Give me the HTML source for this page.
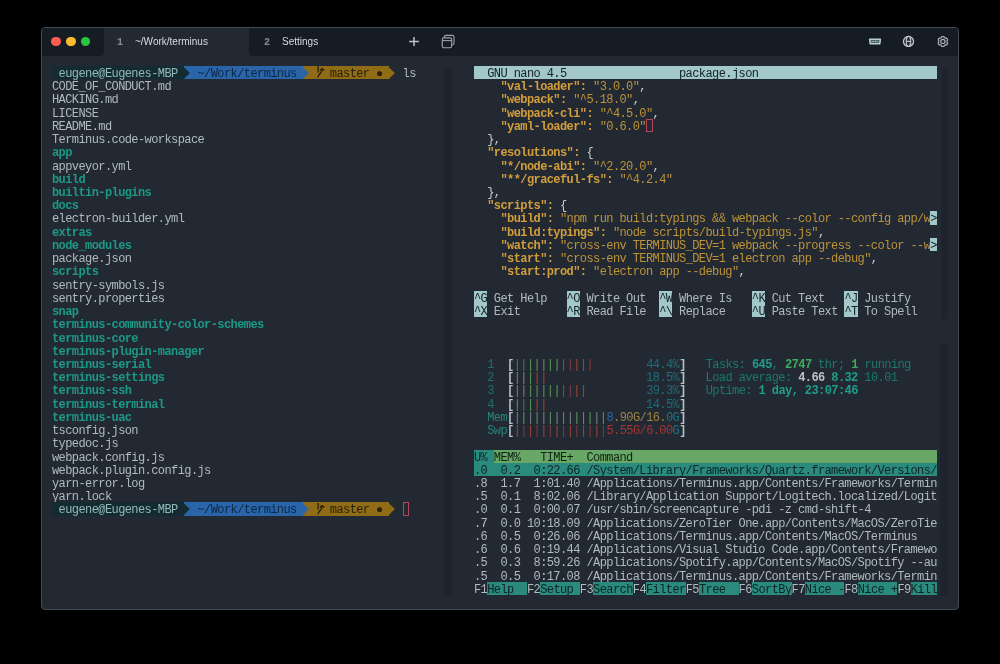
<!DOCTYPE html>
<html><head><meta charset="utf-8"><style>
html,body{margin:0;padding:0;width:1000px;height:664px;overflow:hidden;background:#000;}
#win{position:absolute;left:41px;top:27px;width:916px;height:581px;border:1px solid #434b52;border-radius:4px;background:#222933;overflow:hidden;}
.tbdark{position:absolute;top:0;height:27.6px;background:#161c24;}
.pane{position:absolute;will-change:transform;font-family:"Liberation Mono",monospace;font-size:12px;letter-spacing:-0.588px;color:#afbbbe;}
.r{position:absolute;left:0;height:13.225px;line-height:16px;white-space:pre;}
.r>span{display:inline-block;height:13.225px;vertical-align:top;}
.dot{position:absolute;width:9.5px;height:9.5px;border-radius:50%;top:8.75px;}
.tab{position:absolute;will-change:transform;font-family:"Liberation Sans",sans-serif;font-size:10px;line-height:12px;color:#d6dbe0;top:8px;white-space:pre;}
.tnum{position:absolute;will-change:transform;font-family:"Liberation Mono",monospace;font-weight:bold;font-size:10px;line-height:12px;color:#858d94;top:8px;}
.vs{position:absolute;background:#1e242d;}
.ar,.ic{position:absolute;}
</style></head><body>
<div id="win">
 <div class="tbdark" style="left:0;width:62px;border-bottom-right-radius:4px"></div>
 <div class="tbdark" style="left:207px;right:0;border-bottom-left-radius:4px"></div>
 <div class="dot" style="left:9.45px;background:#fc5c52"></div>
 <div class="dot" style="left:24.25px;background:#fdbc2f"></div>
 <div class="dot" style="left:38.85px;background:#2ac641"></div>
 <div class="tnum" style="left:74.5px;top:8.7px">1</div>
 <div class="tab" style="left:93.3px">~/Work/terminus</div>
 <div class="tnum" style="left:222px;top:8.7px">2</div>
 <div class="tab" style="left:239.7px">Settings</div>
 <div class="vs" style="left:402px;top:39px;width:8px;height:530px"></div>
 <div class="vs" style="left:898.5px;top:39px;width:7.5px;height:252px;border-bottom-left-radius:3px;border-bottom-right-radius:3px"></div>
 <div class="vs" style="left:898px;top:316px;width:8px;height:252px"></div>
</div>

<svg class="ic" style="left:407px;top:35px" width="14" height="13" viewBox="0 0 14 13"><path d="M2.2 6.4 H11.9 M7 1.9 V11" stroke="#b9c0c6" stroke-width="1.5"/></svg>
<svg class="ic" style="left:440px;top:33px" width="16" height="17" viewBox="0 0 16 17"><rect x="4.2" y="2.4" width="9.8" height="9.4" rx="1.8" fill="none" stroke="#9aa3aa" stroke-width="1.1"/><rect x="2.3" y="4.9" width="9.4" height="9.9" rx="1.8" fill="#151b22" stroke="#9aa3aa" stroke-width="1.1"/><path d="M2.3 7.6 H11.7" stroke="#9aa3aa" stroke-width="1.1"/></svg>
<svg class="ic" style="left:866px;top:36px" width="18" height="10" viewBox="0 0 18 10"><path d="M3.6 3.3 H14.4 L13.7 7.8 H4.3 Z" fill="#4e6468" stroke="#b9d0d0" stroke-width="1.5" stroke-linejoin="round"/><path d="M5.6 5.5 H12.4" stroke="#9fb5b6" stroke-width="1.1" stroke-dasharray="1.1 0.6"/></svg>
<svg class="ic" style="left:901px;top:34px" width="15" height="15" viewBox="0 0 15 15"><circle cx="7.5" cy="7.4" r="5.0" fill="none" stroke="#c2cbd0" stroke-width="1.3"/><ellipse cx="7.5" cy="7.4" rx="2.3" ry="5.0" fill="none" stroke="#c2cbd0" stroke-width="1.1"/><path d="M5.4 7.4 H9.6" stroke="#c2cbd0" stroke-width="1.3"/><path d="M3.2 4.9 H11.8 M3.2 9.9 H11.8" stroke="#c2cbd0" stroke-width="0.8" stroke-dasharray="1 1.4" opacity="0.7"/></svg>
<svg class="ic" style="left:934.5px;top:34px" width="15" height="15" viewBox="0 0 15 15"><path d="M6.56 3.52 L6.84 2.51 L8.96 2.51 L9.24 3.52 L10.68 4.35 L11.69 4.09 L12.75 5.92 L12.02 6.67 L12.02 8.33 L12.75 9.08 L11.69 10.91 L10.68 10.65 L9.24 11.48 L8.96 12.49 L6.84 12.49 L6.56 11.48 L5.12 10.65 L4.11 10.91 L3.05 9.08 L3.78 8.33 L3.78 6.67 L3.05 5.92 L4.11 4.09 L5.12 4.35 Z" fill="none" stroke="#aab3b9" stroke-width="1.15" stroke-linejoin="round"/><circle cx="7.9" cy="7.4" r="2.1" fill="none" stroke="#aab3b9" stroke-width="1.15"/></svg>

<div class="pane " style="left:52.40px;top:66.20px"><div class="r" style="top:0.00px"><span style="background:#132b31;color:#93b9bb"> eugene@Eugenes-MBP </span><span style="background:#2a65a9"> </span><span style="background:#2a65a9;color:#0b2745"> ~/Work/terminus </span><span style="background:#8f6c15"> </span><span style="background:#8f6c15;color:#2a2208">   master ● </span>  ls</div>
<div class="r" style="top:13.22px">CODE_OF_CONDUCT.md</div>
<div class="r" style="top:26.45px">HACKING.md</div>
<div class="r" style="top:39.67px">LICENSE</div>
<div class="r" style="top:52.90px">README.md</div>
<div class="r" style="top:66.12px">Terminus.code-workspace</div>
<div class="r" style="top:79.35px"><span style="color:#1c9886;font-weight:bold">app</span></div>
<div class="r" style="top:92.58px">appveyor.yml</div>
<div class="r" style="top:105.80px"><span style="color:#1c9886;font-weight:bold">build</span></div>
<div class="r" style="top:119.02px"><span style="color:#1c9886;font-weight:bold">builtin-plugins</span></div>
<div class="r" style="top:132.25px"><span style="color:#1c9886;font-weight:bold">docs</span></div>
<div class="r" style="top:145.47px">electron-builder.yml</div>
<div class="r" style="top:158.70px"><span style="color:#1c9886;font-weight:bold">extras</span></div>
<div class="r" style="top:171.92px"><span style="color:#1c9886;font-weight:bold">node_modules</span></div>
<div class="r" style="top:185.15px">package.json</div>
<div class="r" style="top:198.38px"><span style="color:#1c9886;font-weight:bold">scripts</span></div>
<div class="r" style="top:211.60px">sentry-symbols.js</div>
<div class="r" style="top:224.82px">sentry.properties</div>
<div class="r" style="top:238.05px"><span style="color:#1c9886;font-weight:bold">snap</span></div>
<div class="r" style="top:251.28px"><span style="color:#1c9886;font-weight:bold">terminus-community-color-schemes</span></div>
<div class="r" style="top:264.50px"><span style="color:#1c9886;font-weight:bold">terminus-core</span></div>
<div class="r" style="top:277.72px"><span style="color:#1c9886;font-weight:bold">terminus-plugin-manager</span></div>
<div class="r" style="top:290.95px"><span style="color:#1c9886;font-weight:bold">terminus-serial</span></div>
<div class="r" style="top:304.18px"><span style="color:#1c9886;font-weight:bold">terminus-settings</span></div>
<div class="r" style="top:317.40px"><span style="color:#1c9886;font-weight:bold">terminus-ssh</span></div>
<div class="r" style="top:330.62px"><span style="color:#1c9886;font-weight:bold">terminus-terminal</span></div>
<div class="r" style="top:343.85px"><span style="color:#1c9886;font-weight:bold">terminus-uac</span></div>
<div class="r" style="top:357.07px">tsconfig.json</div>
<div class="r" style="top:370.30px">typedoc.js</div>
<div class="r" style="top:383.52px">webpack.config.js</div>
<div class="r" style="top:396.75px">webpack.plugin.config.js</div>
<div class="r" style="top:409.97px">yarn-error.log</div>
<div class="r" style="top:423.20px">yarn.lock</div>
<div class="r" style="top:436.43px"><span style="background:#132b31;color:#93b9bb"> eugene@Eugenes-MBP </span><span style="background:#2a65a9"> </span><span style="background:#2a65a9;color:#0b2745"> ~/Work/terminus </span><span style="background:#8f6c15"> </span><span style="background:#8f6c15;color:#2a2208">   master ● </span>  <span style="outline:1px solid #b4485a;outline-offset:-1px"> </span></div></div>
<div class="pane " style="left:474.00px;top:66.20px"><div class="r" style="top:0.00px"><span style="background:#a3c8ca;color:#13202a">  GNU nano 4.5                 package.json                           </span></div>
<div class="r" style="top:13.22px">    <span style="color:#d29e3c;font-weight:bold">"val-loader"</span><span style="color:#d29e3c;font-weight:bold">: </span><span style="color:#bd9338">"3.0.0"</span><span style="color:#c8d0d4">,</span></div>
<div class="r" style="top:26.45px">    <span style="color:#d29e3c;font-weight:bold">"webpack"</span><span style="color:#d29e3c;font-weight:bold">: </span><span style="color:#bd9338">"^5.18.0"</span><span style="color:#c8d0d4">,</span></div>
<div class="r" style="top:39.67px">    <span style="color:#d29e3c;font-weight:bold">"webpack-cli"</span><span style="color:#d29e3c;font-weight:bold">: </span><span style="color:#bd9338">"^4.5.0"</span><span style="color:#c8d0d4">,</span></div>
<div class="r" style="top:52.90px">    <span style="color:#d29e3c;font-weight:bold">"yaml-loader"</span><span style="color:#d29e3c;font-weight:bold">: </span><span style="color:#bd9338">"0.6.0"</span><span style="outline:1px solid #b4485a;outline-offset:-1px"> </span></div>
<div class="r" style="top:66.12px"><span style="color:#c8d0d4">  },</span></div>
<div class="r" style="top:79.35px">  <span style="color:#d29e3c;font-weight:bold">"resolutions"</span><span style="color:#d29e3c;font-weight:bold">: </span><span style="color:#c8d0d4">{</span></div>
<div class="r" style="top:92.58px">    <span style="color:#d29e3c;font-weight:bold">"*/node-abi"</span><span style="color:#d29e3c;font-weight:bold">: </span><span style="color:#bd9338">"^2.20.0"</span><span style="color:#c8d0d4">,</span></div>
<div class="r" style="top:105.80px">    <span style="color:#d29e3c;font-weight:bold">"**/graceful-fs"</span><span style="color:#d29e3c;font-weight:bold">: </span><span style="color:#bd9338">"^4.2.4"</span></div>
<div class="r" style="top:119.02px"><span style="color:#c8d0d4">  },</span></div>
<div class="r" style="top:132.25px">  <span style="color:#d29e3c;font-weight:bold">"scripts"</span><span style="color:#d29e3c;font-weight:bold">: </span><span style="color:#c8d0d4">{</span></div>
<div class="r" style="top:145.47px">    <span style="color:#d29e3c;font-weight:bold">"build"</span><span style="color:#d29e3c;font-weight:bold">: </span><span style="color:#bd9338">"npm run build:typings &amp;&amp; webpack --color --config app/w</span><span style="background:#a3c8ca;color:#13202a">&gt;</span></div>
<div class="r" style="top:158.70px">    <span style="color:#d29e3c;font-weight:bold">"build:typings"</span><span style="color:#d29e3c;font-weight:bold">: </span><span style="color:#bd9338">"node scripts/build-typings.js"</span><span style="color:#c8d0d4">,</span></div>
<div class="r" style="top:171.92px">    <span style="color:#d29e3c;font-weight:bold">"watch"</span><span style="color:#d29e3c;font-weight:bold">: </span><span style="color:#bd9338">"cross-env TERMINUS_DEV=1 webpack --progress --color --w</span><span style="background:#a3c8ca;color:#13202a">&gt;</span></div>
<div class="r" style="top:185.15px">    <span style="color:#d29e3c;font-weight:bold">"start"</span><span style="color:#d29e3c;font-weight:bold">: </span><span style="color:#bd9338">"cross-env TERMINUS_DEV=1 electron app --debug"</span><span style="color:#c8d0d4">,</span></div>
<div class="r" style="top:198.38px">    <span style="color:#d29e3c;font-weight:bold">"start:prod"</span><span style="color:#d29e3c;font-weight:bold">: </span><span style="color:#bd9338">"electron app --debug"</span><span style="color:#c8d0d4">,</span></div>
<div class="r" style="top:211.60px"></div>
<div class="r" style="top:224.82px"><span style="background:#a3c8ca;color:#13202a">^G</span> Get Help   <span style="background:#a3c8ca;color:#13202a">^O</span> Write Out  <span style="background:#a3c8ca;color:#13202a">^W</span> Where Is   <span style="background:#a3c8ca;color:#13202a">^K</span> Cut Text   <span style="background:#a3c8ca;color:#13202a">^J</span> Justify    </div>
<div class="r" style="top:238.05px"><span style="background:#a3c8ca;color:#13202a">^X</span> Exit       <span style="background:#a3c8ca;color:#13202a">^R</span> Read File  <span style="background:#a3c8ca;color:#13202a">^\</span> Replace    <span style="background:#a3c8ca;color:#13202a">^U</span> Paste Text <span style="background:#a3c8ca;color:#13202a">^T</span> To Spell   </div></div>
<div class="pane " style="left:474.00px;top:357.40px"><div class="r" style="top:0.00px">  <span style="color:#1e716b">1</span>  <span style="color:#b9c1c5;font-weight:bold">[</span><span style="color:#4c7a57">|</span><span style="color:#4c7a57">|</span><span style="color:#5a995a">|</span><span style="color:#5a995a">|</span><span style="color:#5a995a">|</span><span style="color:#5a995a">|</span><span style="color:#5a995a">|</span><span style="color:#a8433a">|</span><span style="color:#873a42">|</span><span style="color:#a8433a">|</span><span style="color:#a8433a">|</span><span style="color:#873a42">|</span>        <span style="color:#1f6d79">44.4%</span><span style="color:#b9c1c5;font-weight:bold">]</span>   <span style="color:#1c786d">Tasks: </span><span style="color:#1f9c8b;font-weight:bold">645</span><span style="color:#1c786d">, </span><span style="color:#3cad5c;font-weight:bold">2747</span><span style="color:#1c786d"> thr; </span><span style="color:#3cad5c;font-weight:bold">1</span><span style="color:#1c786d"> running</span></div>
<div class="r" style="top:13.22px">  <span style="color:#1e716b">2</span>  <span style="color:#b9c1c5;font-weight:bold">[</span><span style="color:#77848a">|</span><span style="color:#77848a">|</span><span style="color:#5a995a">|</span><span style="color:#a8433a">|</span><span style="color:#a8433a">|</span>               <span style="color:#1f6d79">18.5%</span><span style="color:#b9c1c5;font-weight:bold">]</span>   <span style="color:#1c786d">Load average: </span><span style="color:#b9c2c6;font-weight:bold">4.66</span> <span style="color:#1f9c8b;font-weight:bold">8.32 </span><span style="color:#1c786d">10.01</span></div>
<div class="r" style="top:26.45px">  <span style="color:#1e716b">3</span>  <span style="color:#b9c1c5;font-weight:bold">[</span><span style="color:#77848a">|</span><span style="color:#77848a">|</span><span style="color:#5a995a">|</span><span style="color:#5a995a">|</span><span style="color:#5a995a">|</span><span style="color:#5a995a">|</span><span style="color:#5a995a">|</span><span style="color:#a8433a">|</span><span style="color:#873a42">|</span><span style="color:#a8433a">|</span><span style="color:#a8433a">|</span>         <span style="color:#1f6d79">39.3%</span><span style="color:#b9c1c5;font-weight:bold">]</span>   <span style="color:#1c786d">Uptime: </span><span style="color:#1f9c8b;font-weight:bold">1 day, 23:07:46</span></div>
<div class="r" style="top:39.67px">  <span style="color:#1e716b">4</span>  <span style="color:#b9c1c5;font-weight:bold">[</span><span style="color:#5a995a">|</span><span style="color:#4c7a57">|</span><span style="color:#5a995a">|</span><span style="color:#a8433a">|</span><span style="color:#a8433a">|</span>               <span style="color:#1f6d79">14.5%</span><span style="color:#b9c1c5;font-weight:bold">]</span></div>
<div class="r" style="top:52.90px">  <span style="color:#23847c">Mem</span><span style="color:#b9c1c5;font-weight:bold">[</span><span style="color:#77848a">|</span><span style="color:#5a995a">|</span><span style="color:#77848a">|</span><span style="color:#5a995a">|</span><span style="color:#77848a">|</span><span style="color:#5a995a">|</span><span style="color:#77848a">|</span><span style="color:#5a995a">|</span><span style="color:#77848a">|</span><span style="color:#5a995a">|</span><span style="color:#77848a">|</span><span style="color:#5a995a">|</span><span style="color:#77848a">|</span><span style="color:#5a995a">|</span><span style="color:#2a64a0">8</span><span style="color:#9b8442">.90G/16.</span><span style="color:#1f7480">0G</span><span style="color:#b9c1c5;font-weight:bold">]</span></div>
<div class="r" style="top:66.12px">  <span style="color:#23847c">Swp</span><span style="color:#b9c1c5;font-weight:bold">[</span><span style="color:#a8433a">|</span><span style="color:#873a42">|</span><span style="color:#a8433a">|</span><span style="color:#873a42">|</span><span style="color:#a8433a">|</span><span style="color:#873a42">|</span><span style="color:#a8433a">|</span><span style="color:#873a42">|</span><span style="color:#a8433a">|</span><span style="color:#873a42">|</span><span style="color:#a8433a">|</span><span style="color:#873a42">|</span><span style="color:#a8433a">|</span><span style="color:#873a42">|</span><span style="color:#a5352f">5.55G/6.00</span><span style="color:#1f7480">G</span><span style="color:#b9c1c5;font-weight:bold">]</span></div>
<div class="r" style="top:79.35px"></div>
<div class="r" style="top:92.58px"><span style="background:#2a8a7e;color:#0d2424">U% </span><span style="background:#69a766;color:#0d2414">MEM%   TIME+  Command                                              </span></div>
<div class="r" style="top:105.80px"><span style="background:#2a8a7e;color:#0d2424">.0  0.2  0:22.66 /System/Library/Frameworks/Quartz.framework/Versions/</span></div>
<div class="r" style="top:119.02px">.8  1.7  1:01.40 /Applications/Terminus.app/Contents/Frameworks/Termin</div>
<div class="r" style="top:132.25px">.5  0.1  8:02.06 /Library/Application Support/Logitech.localized/Logit</div>
<div class="r" style="top:145.47px">.0  0.1  0:00.07 /usr/sbin/screencapture -pdi -z cmd-shift-4</div>
<div class="r" style="top:158.70px">.7  0.0 10:18.09 /Applications/ZeroTier One.app/Contents/MacOS/ZeroTie</div>
<div class="r" style="top:171.92px">.6  0.5  0:26.06 /Applications/Terminus.app/Contents/MacOS/Terminus</div>
<div class="r" style="top:185.15px">.6  0.6  0:19.44 /Applications/Visual Studio Code.app/Contents/Framewo</div>
<div class="r" style="top:198.38px">.5  0.3  8:59.26 /Applications/Spotify.app/Contents/MacOS/Spotify --au</div>
<div class="r" style="top:211.60px">.5  0.5  0:17.08 /Applications/Terminus.app/Contents/Frameworks/Termin</div>
<div class="r" style="top:224.82px">F1<span style="background:#2a8a7e;color:#0d2424">Help  </span>F2<span style="background:#2a8a7e;color:#0d2424">Setup </span>F3<span style="background:#2a8a7e;color:#0d2424">Search</span>F4<span style="background:#2a8a7e;color:#0d2424">Filter</span>F5<span style="background:#2a8a7e;color:#0d2424">Tree  </span>F6<span style="background:#2a8a7e;color:#0d2424">SortBy</span>F7<span style="background:#2a8a7e;color:#0d2424">Nice -</span>F8<span style="background:#2a8a7e;color:#0d2424">Nice +</span>F9<span style="background:#2a8a7e;color:#0d2424">Kill</span></div></div>
<svg class="ar" style="left:183.16px;top:65.70px" width="9" height="15" viewBox="0 0 9 15"><path d="M0 0.5 L6.90 7.1 L0 13.7 Z" fill="#132b31"/></svg>
<svg class="ar" style="left:302.19px;top:65.70px" width="9" height="15" viewBox="0 0 9 15"><path d="M0 0.5 L6.90 7.1 L0 13.7 Z" fill="#2a65a9"/></svg>
<svg class="ar" style="left:388.16px;top:65.70px" width="9" height="15" viewBox="0 0 9 15"><path d="M0 0.5 L6.90 7.1 L0 13.7 Z" fill="#8f6c15"/></svg>
<svg class="ar" style="left:316.92px;top:66.20px" width="9" height="13.2" viewBox="0 0 9 13.2"><path d="M1.1 0 V6.4 M0.9 11.6 C0.9 8 5.1 7.5 5.1 3.4" stroke="#1f1a08" stroke-width="1.2" fill="none"/><path d="M2.9 4.6 L5.1 2.6 L7.3 4.6" stroke="#1f1a08" stroke-width="1.3" fill="none"/></svg>
<svg class="ar" style="left:183.16px;top:502.12px" width="9" height="15" viewBox="0 0 9 15"><path d="M0 0.5 L6.90 7.1 L0 13.7 Z" fill="#132b31"/></svg>
<svg class="ar" style="left:302.19px;top:502.12px" width="9" height="15" viewBox="0 0 9 15"><path d="M0 0.5 L6.90 7.1 L0 13.7 Z" fill="#2a65a9"/></svg>
<svg class="ar" style="left:388.16px;top:502.12px" width="9" height="15" viewBox="0 0 9 15"><path d="M0 0.5 L6.90 7.1 L0 13.7 Z" fill="#8f6c15"/></svg>
<svg class="ar" style="left:316.92px;top:502.62px" width="9" height="13.2" viewBox="0 0 9 13.2"><path d="M1.1 0 V6.4 M0.9 11.6 C0.9 8 5.1 7.5 5.1 3.4" stroke="#1f1a08" stroke-width="1.2" fill="none"/><path d="M2.9 4.6 L5.1 2.6 L7.3 4.6" stroke="#1f1a08" stroke-width="1.3" fill="none"/></svg>
</body></html>
